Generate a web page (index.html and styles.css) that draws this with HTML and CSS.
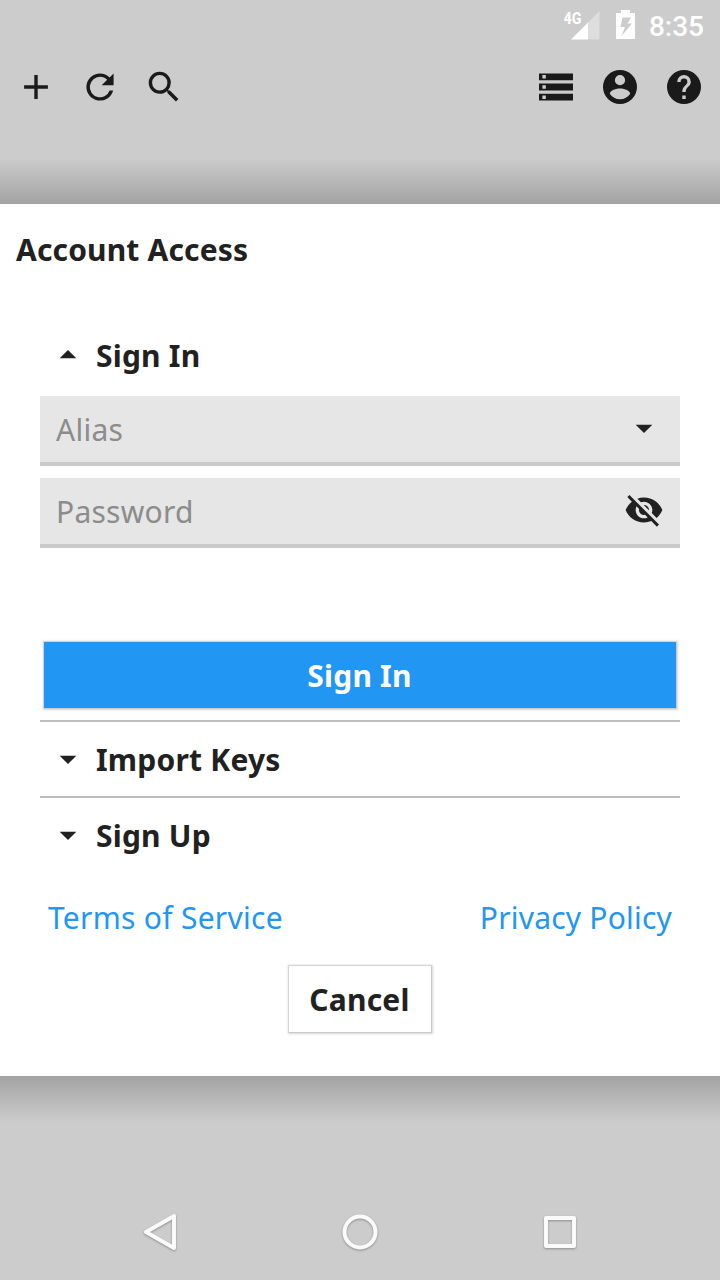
FILE: index.html
```html
<!DOCTYPE html>
<html lang="en">
<head>
<meta charset="utf-8">
<title>Account Access</title>
<link rel="stylesheet" href="styles.css">
</head>
<body>
<div class="screen">
  <div class="status-bar">
    <svg class="status-signal" width="36" height="30" viewBox="564 10 36 30">
      <path fill="#fff" fill-opacity=".35" d="M588 22.500 599.500 11V39.500H588z"/>
      <path fill="#fff" d="M588 22.500V39.500H571z"/>
      <text class="network" x="563.500" y="23.500" textLength="18" lengthAdjust="spacingAndGlyphs">4G</text>
    </svg>
    <svg class="status-battery" width="20" height="30" viewBox="616 10 20 30">
      <path fill="#fff" fill-rule="evenodd" d="M621 10h9v3h5v26h-19V13h5zM622.500 17.500l-2 9.500h4.500l-3.500 9 10.500-12.500h-4.500l3.500-6z"/>
    </svg>
    <span class="clock">8:35</span>
  </div>
  <div class="toolbar">
    <div class="tool-group">
      <span class="tool"><svg class="icon" viewBox="0 0 24 24"><path d="M19 13h-6v6h-2v-6H5v-2h6V5h2v6h6v2z"/></svg></span>
      <span class="tool"><svg class="icon" viewBox="0 0 24 24"><path d="M17.650 6.350A7.960 7.960 0 0 0 12 4a8 8 0 1 0 7.730 10h-2.080A6 6 0 1 1 12 6c1.660 0 3.140.69 4.220 1.780L13 11h7V4l-2.350 2.350z"/></svg></span>
      <span class="tool"><svg class="icon" viewBox="0 0 24 24"><path d="M15.500 14h-.79l-.28-.27A6.470 6.470 0 0 0 16 9.500 6.500 6.500 0 1 0 9.500 16c1.610 0 3.090-.59 4.230-1.570l.27.28v.79l5 4.990L20.490 19l-4.990-5zm-6 0a4.500 4.500 0 1 1 0-9 4.500 4.500 0 0 1 0 9z"/></svg></span>
    </div>
    <div class="tool-group">
      <span class="tool"><svg class="icon" viewBox="0 0 24 24"><path d="M2 20h20v-4H2v4zm2-3h2v2H4v-2zM2 4v4h20V4H2zm4 3H4V5h2v2zm-4 7h20v-4H2v4zm2-3h2v2H4v-2z"/></svg></span>
      <span class="tool"><svg class="icon" viewBox="0 0 24 24"><path d="M12 2a10 10 0 1 0 0 20 10 10 0 0 0 0-20zm0 3a3 3 0 1 1 0 6 3 3 0 0 1 0-6zm0 14.200a7.200 7.200 0 0 1-6-3.220c.03-1.990 4-3.080 6-3.080 1.990 0 5.970 1.090 6 3.080a7.200 7.200 0 0 1-6 3.220z"/></svg></span>
      <span class="tool"><svg class="icon" viewBox="0 0 24 24"><path d="M12 2a10 10 0 1 0 0 20 10 10 0 0 0 0-20zm1 17h-2v-2h2v2zm2.070-7.750l-.9.920C13.450 12.900 13 13.500 13 15h-2v-.5c0-1.100.45-2.100 1.170-2.830l1.240-1.260c.37-.36.59-.86.59-1.410a2 2 0 1 0-4 0H8a4 4 0 1 1 8 0c0 .88-.36 1.680-.93 2.250z"/></svg></span>
    </div>
  </div>
  <main class="dialog">
    <h1 class="title">Account Access</h1>
    <div class="accordion">
      <div class="section section-open"><svg class="caret caret-up" viewBox="0 0 24 24"><path d="M7 14l5-5 5 5z"/></svg><span>Sign In</span></div>
      <div class="field"><span class="placeholder">Alias</span><svg class="field-icon" viewBox="0 0 24 24"><path d="M7 10l5 5 5-5z"/></svg></div>
      <div class="field"><span class="placeholder">Password</span><svg class="field-icon" viewBox="0 0 24 24"><path d="M12 7c2.760 0 5 2.240 5 5 0 .65-.13 1.260-.36 1.830l2.920 2.920c1.510-1.260 2.700-2.890 3.430-4.750-1.730-4.390-6-7.500-11-7.500-1.400 0-2.740.25-3.980.7l2.160 2.160C10.740 7.130 11.350 7 12 7zM2 4.270l2.280 2.280.46.46C3.080 8.300 1.780 10.020 1 12c1.730 4.390 6 7.500 11 7.500 1.550 0 3.030-.3 4.380-.84l.42.42L19.730 22 21 20.730 3.270 3 2 4.270zM7.530 9.800l1.550 1.550c-.05.21-.08.43-.08.65 0 1.660 1.340 3 3 3 .22 0 .44-.03.65-.08l1.550 1.550c-.67.33-1.410.53-2.200.53-2.760 0-5-2.240-5-5 0-.79.2-1.530.53-2.200zm4.310-.78l3.150 3.150.02-.16c0-1.660-1.340-3-3-3l-.17.01z"/></svg></div>
      <button class="sign-in">Sign In</button>
      <div class="section section-ruled"><svg class="caret" viewBox="0 0 24 24"><path d="M7 10l5 5 5-5z"/></svg><span>Import Keys</span></div>
      <div class="section section-ruled"><svg class="caret" viewBox="0 0 24 24"><path d="M7 10l5 5 5-5z"/></svg><span>Sign Up</span></div>
      <div class="links"><a class="terms">Terms of Service</a><a>Privacy Policy</a></div>
      <button class="cancel">Cancel</button>
    </div>
  </main>
  <div class="nav-bar">
    <svg class="nav-icon" viewBox="0 0 48 48"><path d="M38 8v32L10 24z"/></svg>
    <svg class="nav-icon" viewBox="0 0 48 48"><circle cx="24" cy="24" r="15.500"/></svg>
    <svg class="nav-icon" viewBox="0 0 48 48"><rect x="10" y="10" width="28" height="28"/></svg>
  </div>
</div>
</body>
</html>
```
FILE: styles.css
```css
* { box-sizing: border-box; }
body { margin: 0; }
.screen {
  width: 720px;
  height: 1280px;
  display: flex;
  flex-direction: column;
  background: linear-gradient(#ccc 158px, #a3a3a3 204px, #a3a3a3 1076px, #ccc 1122px);
  font-family: "Noto Sans", sans-serif;
  font-size: 30px;
  letter-spacing: .2px;
  color: #212121;
}
.status-bar {
  height: 48px;
  padding: 10px 16px 0 0;
  display: flex;
  justify-content: flex-end;
  letter-spacing: 0;
}
.status-signal { margin-right: 16px; }
.status-battery { margin-right: 13px; }
.network { font: 700 16px Roboto, sans-serif; fill: #fff; }
.clock {
  font: 500 28px/34px Roboto, sans-serif;
  color: #fff;
}
.toolbar {
  height: 156px;
  padding: 0 4px;
  display: flex;
  justify-content: space-between;
}
.tool-group { display: flex; }
.tool {
  width: 64px;
  height: 78px;
  display: flex;
  align-items: center;
  justify-content: center;
}
.icon { width: 40px; height: 40px; fill: #1a1a1a; transform: scale(1.02); }
.dialog {
  height: 872px;
  background: #fff;
}
.title {
  margin: 0;
  padding: 24px 16px 0;
  height: 116px;
  font-size: 30px;
  line-height: 44px;
  font-weight: 700;
  letter-spacing: .15px;
}
.accordion {
  padding: 0 40px;
  display: flex;
  flex-direction: column;
}
.section {
  height: 76px;
  padding-left: 8px;
  display: flex;
  align-items: center;
  gap: 8px;
  font-weight: 700;
  line-height: 44px;
}
.caret { width: 40px; height: 40px; fill: #212121; }
.caret-up { margin-bottom: 2px; }
.section-open { height: 72px; margin-bottom: 4px; }
.section-ruled { border-top: 2px solid #bdbdbd; }
.section-ruled span { padding-top: 2px; }
.field {
  height: 70px;
  margin-bottom: 12px;
  padding: 0 16px;
  display: flex;
  align-items: center;
  justify-content: space-between;
  background: #e6e6e6;
  border-bottom: 4px solid #cacaca;
  color: #8c8c8c;
  line-height: 44px;
}
.placeholder { padding-top: 2px; letter-spacing: .25px; }
.field-icon { width: 40px; height: 40px; margin-bottom: 2px; fill: #212121; }
button {
  font: 700 30px/44px "Noto Sans", sans-serif;
  letter-spacing: .2px;
  border: 0;
  padding: 2px 1px 0 0;
  box-shadow: 0 0 0 1px rgba(0, 0, 0, .06), 0 0 2px 1.5px rgba(0, 0, 0, .17);
}
.sign-in {
  height: 66px;
  margin: 82px 4px 12px;
  background: #2196f3;
  color: #fff;
}
.links {
  height: 44px;
  margin: 24px 8px 0;
  display: flex;
  justify-content: space-between;
  color: #2196f3;
  line-height: 44px;
}
.terms { letter-spacing: .28px; }
.cancel {
  width: 142px;
  height: 66px;
  margin: 26px auto 0;
  background: #fff;
  color: #212121;
}
.nav-bar {
  margin-top: auto;
  height: 96px;
  padding: 0 136px;
  display: flex;
  align-items: center;
  justify-content: space-between;
}
.nav-icon {
  width: 48px;
  height: 48px;
  fill: none;
  stroke: #fafafa;
  stroke-width: 4px;
  stroke-linejoin: round;
  filter: drop-shadow(0 1px 1px rgba(0, 0, 0, .3));
}
```
